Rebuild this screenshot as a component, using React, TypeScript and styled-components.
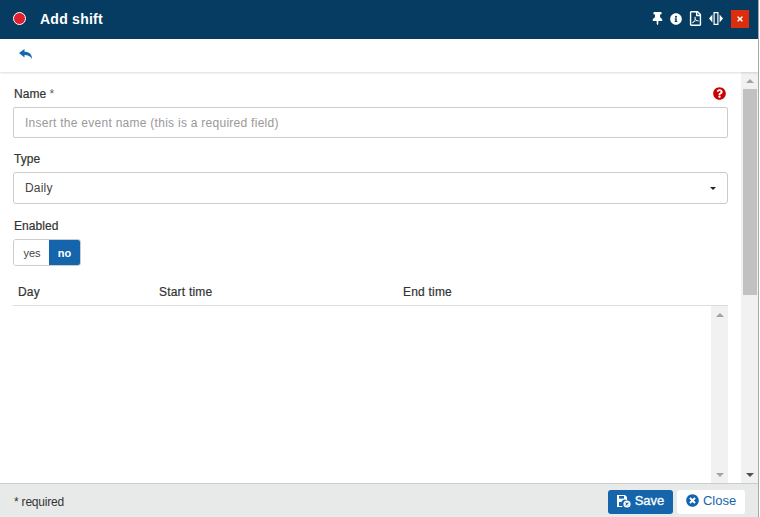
import styled, { createGlobalStyle } from 'styled-components'
import { FaThumbtack, FaInfoCircle, FaRegFilePdf, FaQuestionCircle, FaTimesCircle, FaTimes } from 'react-icons/fa'

const Global = createGlobalStyle`
  html, body { margin: 0; padding: 0; background: #fff; }
  body { font-family: "Liberation Sans", Arial, sans-serif; font-size: 12px; color: #333; }
`

const Win = styled.div`
  width: 758px;
  height: 517px;
  display: flex;
  flex-direction: column;
  border-right: 1px solid #a9a9a9;
  background: #fff;
  overflow: hidden;
`

const Header = styled.header`
  height: 39px;
  flex: none;
  box-sizing: border-box;
  background: #063c61;
  display: flex;
  align-items: center;
  padding: 0 9px 2px 13px;
  color: #fff;
`

const Dot = styled.span`
  width: 11px;
  height: 11px;
  border-radius: 50%;
  background: #e0202f;
  border: 1px solid #fff;
  margin-right: 14px;
`

const Title = styled.h1`
  margin: 0;
  font-size: 14px;
  font-weight: 700;
  letter-spacing: .25px;
  flex: 1;
`

const Tools = styled.div`
  display: flex;
  align-items: center;
  gap: 6px;
`

const CloseX = styled.button`
  width: 18px;
  height: 18px;
  background: #dc2e0c;
  border: 0;
  padding: 0;
  margin-left: 2px;
  color: #fff;
  display: flex;
  align-items: center;
  justify-content: center;
`

const Toolbar = styled.div`
  height: 33px;
  flex: none;
  display: flex;
  align-items: center;
  padding-left: 19px;
  padding-bottom: 3px;
  box-sizing: border-box;
  color: #1467b0;
  box-shadow: 0 1px 2px rgba(0, 0, 0, .14);
  position: relative;
`

const Main = styled.div`
  flex: 1;
  min-height: 0;
  display: flex;
`

const Content = styled.div`
  flex: 1;
  min-width: 0;
  padding: 14px 13px 0 13px;
  display: flex;
  flex-direction: column;
`

const LabelRow = styled.div`
  display: flex;
  justify-content: space-between;
  align-items: center;
  height: 15px;
  margin-bottom: 6px;
  padding-top: 1px;
  box-sizing: border-box;
`

const Label = styled.label<{ $gap?: number }>`
  display: block;
  font-size: 12px;
  line-height: 15px;
  padding-left: 1px;
  letter-spacing: .05px;
  color: #333;
  -webkit-text-stroke: 0.2px #333;
  margin-top: ${p => p.$gap ?? 0}px;
`

const Star = styled.span`
  color: #567;
  -webkit-text-stroke: 0;
`

const Help = styled(FaQuestionCircle)`
  color: #cc0000;
  margin: 0 2px 1px 0;
`

const Input = styled.input`
  display: block;
  box-sizing: border-box;
  width: 100%;
  height: 31px;
  border: 1px solid #ccc;
  border-radius: 2px;
  padding: 0 11px;
  font: 12px "Liberation Sans", Arial, sans-serif;
  letter-spacing: .27px;
  outline: 0;
  &::placeholder { color: #999; opacity: 1; }
`

const Select = styled.div`
  box-sizing: border-box;
  height: 32px;
  margin-top: 5px;
  border: 1px solid #ccc;
  border-radius: 3px;
  padding: 0 11px 0 11px;
  display: flex;
  align-items: center;
  justify-content: space-between;
  color: #444;
  letter-spacing: .2px;
`

const Caret = styled.i`
  width: 0;
  height: 0;
  border-left: 3px solid transparent;
  border-right: 3px solid transparent;
  border-top: 3px solid #222;
`

const Toggle = styled.div`
  display: flex;
  width: 68px;
  height: 27px;
  margin-top: 5px;
  box-sizing: border-box;
  border: 1px solid #ccc;
  border-radius: 3px;
  overflow: hidden;
  font-size: 11px;
`

const ToggleOpt = styled.span<{ $on?: boolean }>`
  flex: ${p => (p.$on ? '0 0 31px' : 1)};
  display: flex;
  align-items: center;
  justify-content: center;
  padding-left: ${p => (p.$on ? 0 : 1)}px;
  background: ${p => (p.$on ? '#1565ad' : '#fff')};
  color: ${p => (p.$on ? '#fff' : '#444')};
  font-weight: ${p => (p.$on ? 700 : 400)};
`

const TableHead = styled.div`
  display: grid;
  grid-template-columns: 141px 244px 1fr;
  height: 40px;
  padding: 14px 0 0 5px;
  box-sizing: border-box;
  border-bottom: 1px solid #ddd;
  letter-spacing: .2px;
  -webkit-text-stroke: 0.2px #333;
  line-height: 25px;
`

const TableBody = styled.div`
  flex: 1;
  min-height: 0;
  display: flex;
  justify-content: flex-end;
`

const Track = styled.div<{ $w: number; $bg: string }>`
  width: ${p => p.$w}px;
  flex: none;
  background: ${p => p.$bg};
  display: flex;
  flex-direction: column;
  align-items: stretch;
`

const Arrow = styled.div<{ $down?: boolean; $dim?: boolean }>`
  height: 17px;
  flex: none;
  display: flex;
  align-items: center;
  justify-content: center;
  &::after {
    content: '';
    border-left: 4px solid transparent;
    border-right: 4px solid transparent;
    ${p => (p.$down ? 'border-top' : 'border-bottom')}: 4px solid ${p => (p.$dim ? '#a3a3a3' : '#505050')};
  }
`

const Thumb = styled.div`
  height: 206px;
  flex: none;
  margin: 0 1px 0 2px;
  background: #c1c1c1;
`

const Spacer = styled.div`
  flex: 1;
`

const Footer = styled.footer`
  height: 34px;
  flex: none;
  background: #e8eaea;
  border-top: 1px solid #ccc;
  box-sizing: border-box;
  display: flex;
  align-items: center;
  padding: 3px 13px 0 14px;
  gap: 4px;
`

const Required = styled.span`
  flex: 1;
  font-size: 12px;
  letter-spacing: -.2px;
  color: #333;
`

const Btn = styled.button<{ $primary?: boolean }>`
  height: 24px;
  width: ${p => (p.$primary ? 65 : 68)}px;
  box-sizing: border-box;
  border: 0;
  border-radius: 3px;
  padding: 0 0 3px;
  display: flex;
  align-items: center;
  justify-content: center;
  gap: 4px;
  font: 13px "Liberation Sans", Arial, sans-serif;
  -webkit-text-stroke: ${p => (p.$primary ? '0.3px #fff' : '0')};
  background: ${p => (p.$primary ? '#1565ad' : '#fff')};
  color: ${p => (p.$primary ? '#fff' : '#1565ad')};
`

const BackIcon = () => (
  <svg width="13" height="10" viewBox="0 0 13 10" fill="currentColor">
    <path d="M0 4L5.5 0v2.7C10 2.7 13 4.8 13 10 11.6 7.2 9.2 6 5.5 6v2.4z" />
  </svg>
)

const SaveIcon = () => (
  <svg width="14" height="14" viewBox="0 0 14 14" fill="currentColor">
    <path d="M0 1h8l2 2v3.2a4 4 0 0 0-4.2 6.8H0z" />
    <rect x="2" y="2" width="5" height="2.6" fill="#1565ad" />
    <rect x="2" y="8" width="3" height="4" fill="#1565ad" />
    <circle cx="10" cy="10" r="3.6" />
    <path d="M8.6 8.6l2.8 2.8M11.4 8.6l-2.8 2.8" stroke="#1565ad" strokeWidth="1.1" />
  </svg>
)

const ResizeIcon = () => (
  <svg width="14" height="15" viewBox="0 0 14 15" fill="#fff">
    <path d="M0 7.5l3.4-4v8z" />
    <path d="M14 7.5l-3.4-4v8z" />
    <path d="M4.5 1h5v13h-5zM5.7 2.2v10.6h2.6V2.2z" fillRule="evenodd" />
  </svg>
)

export default function App() {
  return (
    <Win>
      <Global />
      <Header>
        <Dot />
        <Title>Add shift</Title>
        <Tools>
          <FaThumbtack size={13} />
          <FaInfoCircle size={12} />
          <FaRegFilePdf size={15} />
          <ResizeIcon />
          <CloseX><FaTimes size={8} /></CloseX>
        </Tools>
      </Header>
      <Toolbar>
        <BackIcon />
      </Toolbar>
      <Main>
        <Content>
          <LabelRow>
            <Label>Name <Star>*</Star></Label>
            <Help size={13} />
          </LabelRow>
          <Input placeholder="Insert the event name (this is a required field)" />
          <Label $gap={14}>Type</Label>
          <Select>
            Daily
            <Caret />
          </Select>
          <Label $gap={15}>Enabled</Label>
          <Toggle>
            <ToggleOpt>yes</ToggleOpt>
            <ToggleOpt $on>no</ToggleOpt>
          </Toggle>
          <TableHead>
            <span>Day</span>
            <span>Start time</span>
            <span>End time</span>
          </TableHead>
          <TableBody>
            <Track $w={17} $bg="#f1f1f1">
              <Arrow $dim />
              <Spacer />
              <Arrow $down $dim />
            </Track>
          </TableBody>
        </Content>
        <Track $w={17} $bg="#f1f1f1">
          <Arrow $dim />
          <Thumb />
          <Spacer />
          <Arrow $down />
        </Track>
      </Main>
      <Footer>
        <Required>* required</Required>
        <Btn $primary><SaveIcon />Save</Btn>
        <Btn><FaTimesCircle size={13} />Close</Btn>
      </Footer>
    </Win>
  )
}
